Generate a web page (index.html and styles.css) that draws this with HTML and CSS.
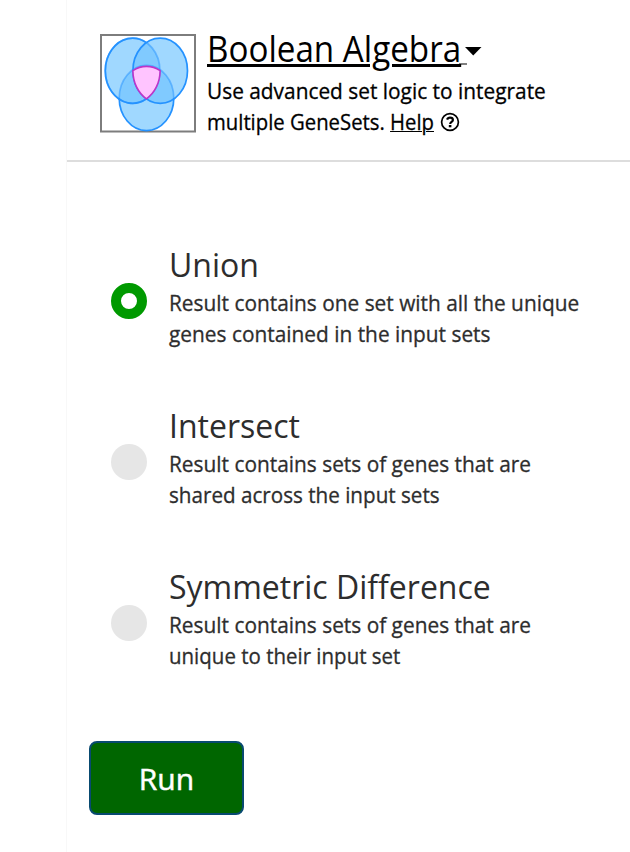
FILE: index.html
```html
<!DOCTYPE html>
<html lang="en"><head><meta charset="utf-8"><title>Boolean Algebra</title><link rel="stylesheet" href="styles.css"></head>
<body>
<main class="panel">
<header class="header">
<svg class="logo" viewBox="100 34 96 98.5"><rect x="101" y="35" width="94" height="96.5" fill="#fff" stroke="#7d7d7d" stroke-width="2"/>
<defs><clipPath id="left"><ellipse cx="132.6" cy="70.7" rx="27.3" ry="32.6"/></clipPath><clipPath id="right"><ellipse cx="160.2" cy="70.7" rx="27.3" ry="32.6"/></clipPath></defs>
<g fill="#a0d8ff"><ellipse cx="146.5" cy="98" rx="27.3" ry="32.6"/><ellipse cx="132.6" cy="70.7" rx="27.3" ry="32.6"/><ellipse cx="160.2" cy="70.7" rx="27.3" ry="32.6"/></g>
<g fill="#80caff"><ellipse cx="146.5" cy="98" rx="27.3" ry="32.6" clip-path="url(#left)"/><ellipse cx="146.5" cy="98" rx="27.3" ry="32.6" clip-path="url(#right)"/><ellipse cx="132.6" cy="70.7" rx="27.3" ry="32.6" clip-path="url(#right)"/></g>
<g fill="none" stroke="#2492ff" stroke-width="1.7"><g stroke-opacity=".5"><ellipse cx="132.6" cy="70.7" rx="27.3" ry="32.6"/><path d="M119.2 98A27.3 32.6 0 0 1 173.8 98"/></g><path d="M119.2 98A27.3 32.6 0 0 0 173.8 98"/><path d="M146.4 42.6A27.3 32.6 0 1 0 146.4 98.8"/><ellipse cx="160.2" cy="70.7" rx="27.3" ry="32.6"/></g>
<path d="M132.9 70.7A27.3 32.6 0 0 1 160.1 70.7A27.3 32.6 0 0 1 146.4 98.8A27.3 32.6 0 0 1 132.9 70.7Z" fill="#ffc4ff" stroke="#bd35c8" stroke-width="1.6"/></svg>
<div class="intro"><h1 class="title"><a class="name">Boolean Algebra</a><svg class="caret" viewBox="0 0 23 18"><path d="M6 0h16.5l-8.25 8.5z"/><path d="M0 16.5h8v1H0z"/></svg></h1>
<p class="lead"><span class="line">Use advanced set logic to integrate</span><span class="help-row"><span class="line tight">multiple GeneSets. <a class="help">Help</a></span><svg class="question" viewBox="0 0 20 20"><circle cx="10" cy="10" r="8.4" fill="none" stroke="#000" stroke-width="1.7"/><path d="M7.1 7.7C7.6 6.2 8.6 5.6 10 5.6c1.7 0 2.9 1 2.9 2.3 0 2-2.7 2-2.7 4" fill="none" stroke="#000" stroke-width="2.2"/><path d="M8.8 13h2.6v2.3H8.8z"/></svg></span></p></div>
</header>
<section class="options">
<label class="option"><span class="radio on"></span><span class="copy"><b class="label">Union</b><span class="line">Result contains one set with all the unique</span><span class="line">genes contained in the input sets</span></span></label>
<label class="option"><span class="radio"></span><span class="copy"><b class="label">Intersect</b><span class="line">Result contains sets of genes that are</span><span class="line medium">shared across the input sets</span></span></label>
<label class="option"><span class="radio"></span><span class="copy"><b class="label">Symmetric Difference</b><span class="line">Result contains sets of genes that are</span><span class="line narrow">unique to their input set</span></span></label>
</section>
<button class="run">Run</button>
</main></body></html>
```
FILE: styles.css
```css
*{box-sizing:border-box}
body{margin:0;background:#fff;color:#000}
.panel{margin-left:66px;height:852px;border-left:1px solid #f8f8f8}
.header{height:162px;border-bottom:2px solid #ddd;display:flex;padding:34px 0 0 33px;gap:11px}
.logo{width:96px;height:98.5px;flex:none;margin-left:-.5px;margin-right:.5px}
.title{margin:-6px 0 0;width:275px;height:42px;font:400 36px/42px "Open Sans",sans-serif;display:flex;align-items:flex-start}
.name{flex:none;width:254px;white-space:nowrap;transform:scaleX(.922);transform-origin:left;text-decoration:underline;text-decoration-thickness:3px;text-underline-offset:2px}
.caret{flex:none;width:23px;height:18px;margin:19px 0 0 -2px}
.lead{margin:5px 0 0}
.line{display:block;font:22px/31px "Open Sans",sans-serif;white-space:nowrap;transform:scaleX(.948);transform-origin:left;-webkit-text-stroke:.3px}
.medium{transform:scaleX(.938)}
.narrow{transform:scaleX(.931)}
.tight{width:233px;transform:scaleX(.923)}
.help-row{display:flex;align-items:center}
.question{width:20px;height:20px}
.help{text-decoration:underline;text-decoration-thickness:1px}
.options{padding-top:85px}
.option{display:flex;align-items:center;height:107px;margin-bottom:54px;padding-left:44px;gap:22px;color:#2d2d2d}
.radio{width:36px;height:36px;border-radius:50%;background:#e6e6e6}
.on{border:10px solid #009900;background:#fff}
.copy{margin-bottom:8px}
.label{display:block;font:400 32px/42px "Open Sans",sans-serif;margin-bottom:1px}
.run{display:block;margin:65px 0 0 22px;width:155px;height:74px;border:2px solid #084a70;border-radius:8px;background:#060;color:#fff;font:400 30px "Open Sans",sans-serif;-webkit-text-stroke:.5px}
.option:last-child{margin-bottom:0}
```
